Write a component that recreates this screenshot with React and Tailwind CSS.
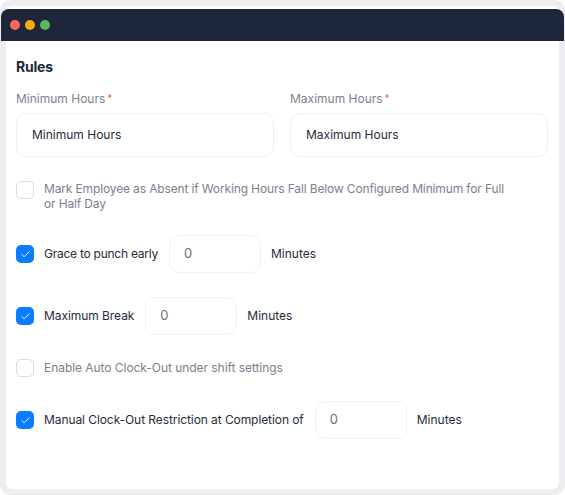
import { Check } from 'lucide-react'

const font = { fontFamily: '"Inter", "Noto Sans", sans-serif' }

function Box({ checked }) {
  if (checked) {
    return (
      <span className="flex h-[18px] w-[18px] shrink-0 items-center justify-center rounded-[5px] bg-[#0a7cff]">
        <Check size={11} strokeWidth={2} className="text-white" />
      </span>
    )
  }
  return <span className="h-[18px] w-[18px] shrink-0 rounded-[5px] border border-[#d9dce3] bg-white"></span>
}

function MinutesRow({ label, className, labelClass }) {
  return (
    <div className={`flex h-[38px] items-center ${className}`}>
      <Box checked />
      <span className={`ml-[10px] text-[12px] text-[#252b3b] ${labelClass}`}>{label}</span>
      <div className="ml-[11px] flex h-[38px] w-[92px] items-center rounded-[10px] border border-[#eff1f4] bg-white pl-[14px] text-[13px] text-[#6b7180]">0</div>
      <span className="ml-[10px] text-[12px] text-[#252b3b]">Minutes</span>
    </div>
  )
}

function Field({ label }) {
  return (
    <div className="flex-1">
      <div className="flex text-[12px] leading-[16px] text-[#7b8090]">
        {label}
        <span className="ml-[2px] text-[10px] leading-[14px] text-[#ef6b6b]">*</span>
      </div>
      <div className="mt-[6px] flex h-[44px] items-center rounded-[10px] border border-[#eceff2] bg-white pl-[15px] text-[12px] text-[#252b3b]">{label}</div>
    </div>
  )
}

export default function App() {
  return (
    <div className="h-[495px] w-[565px] bg-white" style={font}>
      <div className="h-full rounded-[10px] bg-[#eceef2] px-[6px] pb-[6px] pt-[6px]">
        <div className="h-full rounded-[6px] bg-white pt-[3px]">
          {/* barra de ventana */}
          <div className="-mx-[5px] flex h-[32px] items-center gap-[5px] rounded-t-[8px] bg-[#1e2639] pl-[9px]">
            <span className="h-[10px] w-[10px] rounded-full bg-[#ff6363]"></span>
            <span className="h-[10px] w-[10px] rounded-full bg-[#ffa80a]"></span>
            <span className="h-[10px] w-[10px] rounded-full bg-[#5cb85c]"></span>
          </div>

          <div className="pl-[10px] pr-[11px] pt-[17px]">
            <h2 className="text-[14px] font-bold leading-[18px] tracking-[-0.2px] text-[#1e2639]">Rules</h2>

            <div className="mt-[15px] flex gap-[16px]">
              <Field label="Minimum Hours" />
              <Field label="Maximum Hours" />
            </div>

            <div className="mt-[24px] flex items-start gap-[10px]">
              <Box />
              <p className="w-[470px] text-[12px] leading-[15px] tracking-[-0.14px] text-[#7b8090]">
                Mark Employee as Absent if Working Hours Fall Below Configured Minimum for Full or Half Day
              </p>
            </div>

            <MinutesRow label="Grace to punch early" className="mt-[24px]" labelClass="tracking-[-0.25px]" />
            <MinutesRow label="Maximum Break" className="mt-[24px]" labelClass="tracking-[-0.06px]" />

            <div className="mt-[24px] flex h-[18px] items-center gap-[10px]">
              <Box />
              <span className="text-[12px] tracking-[-0.05px] text-[#7b8090]">Enable Auto Clock-Out under shift settings</span>
            </div>

            <MinutesRow label="Manual Clock-Out Restriction at Completion of" className="mt-[24px]" labelClass="tracking-[-0.08px]" />
          </div>
        </div>
      </div>
    </div>
  )
}
